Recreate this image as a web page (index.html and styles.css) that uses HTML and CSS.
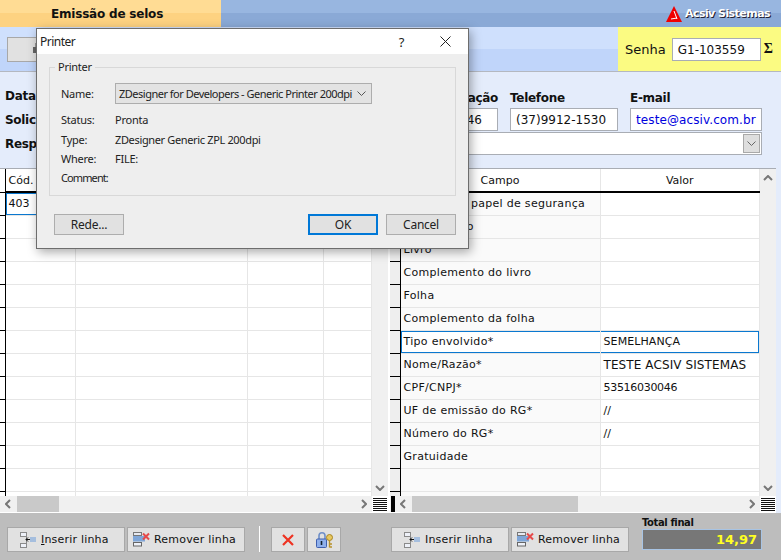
FILE: index.html
```html
<!DOCTYPE html>
<html lang="pt-BR">
<head>
  <meta charset="UTF-8" />
  <title>Emissão de selos</title>
  <link rel="stylesheet" href="styles.css">
</head>
<body>
  <svg class="defs" width="0" height="0">
    <symbol id="icoInserir" viewBox="0 0 16 16">
      <rect x="0.5" y="0.5" width="6" height="4" fill="#eef1f8" stroke="#8a8a8a" />
      <rect x="0.5" y="11.5" width="6" height="4" fill="#eef1f8" stroke="#8a8a8a" />
      <path d="M6.5 4.5v7" stroke="#888" fill="none" />
      <path d="M6 7.5h4M8 5.5l-2 2 2 2" stroke="#111" fill="none" />
      <rect x="10" y="5" width="6" height="5" fill="#a5bede" />
    </symbol>
    <symbol id="icoRemover" viewBox="0 0 17 15">
      <rect x="0.5" y="0.5" width="8" height="3" fill="#e6e9f0" stroke="#777" />
      <rect x="0" y="4" width="12" height="5.5" fill="#7fa6d8" />
      <rect x="0.5" y="10.5" width="8" height="3.5" fill="#eef1f8" stroke="#666" />
      <path d="M10 1.5l6 6M16 1.5l-6 6" stroke="#e64a4a" stroke-width="2" fill="none" />
    </symbol>
    <symbol id="icoLinhas" viewBox="0 0 14 13">
      <path d="M0 .5h14M0 2.5h14M0 4.5h14M0 6.5h14M0 8.5h14M0 10.5h14M0 12.5h14" stroke="#111" fill="none" />
    </symbol>
    <symbol id="chevUp" viewBox="0 0 10 6"><path d="M1 5l4-4 4 4" stroke="#777" stroke-width="2" fill="none" /></symbol>
    <symbol id="chevDown" viewBox="0 0 10 6"><path d="M1 1l4 4 4-4" stroke="#777" stroke-width="2" fill="none" /></symbol>
    <symbol id="chevLeft" viewBox="0 0 6 10"><path d="M5 1L1 5l4 4" stroke="#777" stroke-width="2" fill="none" /></symbol>
    <symbol id="chevRight" viewBox="0 0 6 10"><path d="M1 1l4 4-4 4" stroke="#777" stroke-width="2" fill="none" /></symbol>
  </svg>

  <div class="topo">
    <div class="aba">Emissão de selos</div>
    <div class="marca">
      <svg class="logo" width="16" height="16" viewBox="0 0 16 16">
        <path d="M8 0L16 16H0z" fill="#f00000" />
        <path d="M8 5l3 8M11 12L5 13" stroke="#fff" stroke-width="1" fill="none" />
      </svg>
      <span>Acsiv Sistemas</span>
    </div>
  </div>

  <div class="barra">
    <button class="btn-imprimir">
      <svg width="14" height="14" viewBox="0 0 14 14"><rect x="1" y="5" width="12" height="6" fill="#666" /><rect x="3" y="1" width="8" height="4" fill="#999" /></svg>
    </button>
    <div class="senha">
      <label>Senha</label>
      <span class="campo senha-campo">G1-103559</span>
      <span class="sigma">Σ</span>
    </div>
  </div>

  <div class="dados">
    <div class="colunas">
      <div class="rotulos">
        <div>Data</div>
        <div>Solicitante</div>
        <div>Responsável</div>
      </div>
      <div class="campos">
        <div class="linha-topo">
          <div class="grupo g-identificacao">
            <label>Identificação</label>
            <span class="campo">53516030046</span>
          </div>
          <div class="grupo g-telefone">
            <label>Telefone</label>
            <span class="campo">(37)9912-1530</span>
          </div>
          <div class="grupo g-email">
            <label>E-mail</label>
            <span class="campo email">teste@acsiv.com.br</span>
          </div>
        </div>
        <div class="combo">
          <span class="combo-seta"><svg width="9" height="5" viewBox="0 0 9 5"><path d="M.5.5l4 4 4-4" stroke="#666" fill="none" /></svg></span>
        </div>
      </div>
    </div>
  </div>

  <div class="grades">
    <div class="grade grade-esq">
      <div class="grade-corpo">
        <table class="tabela">
          <colgroup><col class="c-ind-esq" /><col class="c-cod" /><col class="c-a" /><col class="c-b" /><col /></colgroup>
          <thead><tr><th class="ind"></th><th class="cod">Cód.</th><th></th><th></th><th></th></tr></thead>
          <tbody>
            <tr><td class="ind"></td><td class="foco-cel">403</td><td></td><td></td><td></td></tr>
            <tr><td class="ind"></td><td></td><td></td><td></td><td></td></tr>
            <tr><td class="ind"></td><td></td><td></td><td></td><td></td></tr>
            <tr><td class="ind"></td><td></td><td></td><td></td><td></td></tr>
            <tr><td class="ind"></td><td></td><td></td><td></td><td></td></tr>
            <tr><td class="ind"></td><td></td><td></td><td></td><td></td></tr>
            <tr><td class="ind"></td><td></td><td></td><td></td><td></td></tr>
            <tr><td class="ind"></td><td></td><td></td><td></td><td></td></tr>
            <tr><td class="ind"></td><td></td><td></td><td></td><td></td></tr>
            <tr><td class="ind"></td><td></td><td></td><td></td><td></td></tr>
            <tr><td class="ind"></td><td></td><td></td><td></td><td></td></tr>
            <tr><td class="ind"></td><td></td><td></td><td></td><td></td></tr>
            <tr><td class="ind"></td><td></td><td></td><td></td><td></td></tr>
            <tr><td class="ind"></td><td></td><td></td><td></td><td></td></tr>
          </tbody>
        </table>
        <div class="vscroll">
          <svg width="10" height="6"><use href="#chevUp" /></svg>
          <svg width="10" height="6"><use href="#chevDown" /></svg>
        </div>
      </div>
      <div class="hscroll">
        <svg width="6" height="10"><use href="#chevLeft" /></svg>
        <div class="trilho"><span class="polegar pol-esq"></span></div>
        <svg width="6" height="10"><use href="#chevRight" /></svg>
        <span class="canto"><svg width="14" height="13"><use href="#icoLinhas" /></svg></span>
      </div>
    </div>

    <div class="divisor"><span></span></div>

    <div class="grade grade-dir">
      <div class="grade-corpo">
        <table class="tabela">
          <colgroup><col class="c-ind-dir" /><col class="c-campo" /><col /></colgroup>
          <thead><tr><th class="ind"></th><th>Campo</th><th>Valor</th></tr></thead>
          <tbody>
            <tr><td class="ind"></td><td class="rot">Número do papel de segurança</td><td></td></tr>
            <tr><td class="ind"></td><td class="rot">Nº do termo</td><td></td></tr>
            <tr><td class="ind"></td><td class="rot">Livro</td><td></td></tr>
            <tr><td class="ind"></td><td class="rot">Complemento do livro</td><td></td></tr>
            <tr><td class="ind"></td><td class="rot">Folha</td><td></td></tr>
            <tr><td class="ind"></td><td class="rot">Complemento da folha</td><td></td></tr>
            <tr class="foco"><td class="ind"></td><td class="rot">Tipo envolvido*</td><td class="val">SEMELHANÇA</td></tr>
            <tr><td class="ind"></td><td class="rot">Nome/Razão*</td><td class="val val-nome">TESTE ACSIV SISTEMAS</td></tr>
            <tr><td class="ind"></td><td class="rot">CPF/CNPJ*</td><td class="val val-num">53516030046</td></tr>
            <tr><td class="ind"></td><td class="rot">UF de emissão do RG*</td><td class="val">//</td></tr>
            <tr><td class="ind"></td><td class="rot">Número do RG*</td><td class="val">//</td></tr>
            <tr><td class="ind"></td><td class="rot">Gratuidade</td><td></td></tr>
            <tr><td class="ind"></td><td class="rot"></td><td></td></tr>
            <tr><td class="ind"></td><td class="rot"></td><td></td></tr>
          </tbody>
        </table>
        <div class="vscroll">
          <svg width="10" height="6"><use href="#chevUp" /></svg>
          <svg width="10" height="6"><use href="#chevDown" /></svg>
        </div>
      </div>
      <div class="hscroll">
        <svg width="6" height="10"><use href="#chevLeft" /></svg>
        <div class="trilho"><span class="polegar pol-dir"></span></div>
        <svg width="6" height="10"><use href="#chevRight" /></svg>
        <span class="canto"><svg width="14" height="13"><use href="#icoLinhas" /></svg></span>
      </div>
    </div>
  </div>

  <div class="rodape">
    <button class="btn btn-linha"><svg width="16" height="16"><use href="#icoInserir" /></svg><span><u>I</u>nserir linha</span></button>
    <button class="btn btn-linha btn-rem"><svg width="17" height="15"><use href="#icoRemover" /></svg><span>Remover linha</span></button>
    <span class="sep"></span>
    <button class="btn btn-ico">
      <svg width="12" height="12" viewBox="0 0 12 12"><path d="M1 1l10 10M11 1L1 11" stroke="#ee3322" stroke-width="2.2" fill="none" /></svg>
    </button>
    <button class="btn btn-ico">
      <svg width="17" height="16" viewBox="0 0 17 16">
        <path d="M3 7V3.8a3 3 0 0 1 6 0V7" stroke="#6f8fc8" stroke-width="1.6" fill="none" />
        <rect x="0.5" y="7" width="10" height="8.5" rx="1" fill="#8fb0ec" stroke="#3f5fae" />
        <path d="M5.5 9v4" stroke="#123" stroke-width="1.6" />
        <circle cx="13.5" cy="5.5" r="3" fill="#e8c860" stroke="#a88420" />
        <path d="M13.5 8v7.5M13.5 12h2.5M13.5 15h2.5" stroke="#b8922c" stroke-width="1.4" fill="none" />
      </svg>
    </button>
    <button class="btn btn-linha btn-dir"><svg width="16" height="16"><use href="#icoInserir" /></svg><span>Inserir linha</span></button>
    <button class="btn btn-linha btn-rem"><svg width="17" height="15"><use href="#icoRemover" /></svg><span>Remover linha</span></button>
    <div class="total">
      <label>Total final</label>
      <div class="total-valor">14,97</div>
    </div>
  </div>

  <div class="dialogo">
    <div class="dlg-titulo">
      <span class="dlg-nome">Printer</span>
      <span class="dlg-ajuda">?</span>
      <svg class="dlg-fechar" width="11" height="11" viewBox="0 0 11 11"><path d="M.5.5l10 10M10.5.5l-10 10" stroke="#222" fill="none" /></svg>
    </div>
    <div class="dlg-corpo">
      <fieldset class="dlg-grupo">
        <legend>Printer</legend>
        <div class="dlg-linha dlg-linha-nome">
          <span class="dlg-rot">Name:</span>
          <span class="dlg-select"><span class="dlg-select-txt">ZDesigner for Developers - Generic Printer 200dpi</span>
            <svg width="9" height="5" viewBox="0 0 9 5"><path d="M.5.5l4 4 4-4" stroke="#555" fill="none" /></svg>
          </span>
        </div>
        <div class="dlg-linha"><span class="dlg-rot">Status:</span><span>Pronta</span></div>
        <div class="dlg-linha"><span class="dlg-rot">Type:</span><span class="dlg-tipo">ZDesigner Generic ZPL 200dpi</span></div>
        <div class="dlg-linha"><span class="dlg-rot">Where:</span><span>FILE:</span></div>
        <div class="dlg-linha"><span class="dlg-rot dlg-comment">Comment:</span><span></span></div>
      </fieldset>
      <div class="dlg-botoes">
        <button class="dlg-btn">Rede...</button>
        <button class="dlg-btn dlg-ok">OK</button>
        <button class="dlg-btn">Cancel</button>
      </div>
    </div>
  </div>
</body>
</html>
```

FILE: styles.css
```css
* { box-sizing: border-box; }

html, body { margin: 0; height: 100%; }

body {
  position: relative;
  width: 781px;
  height: 560px;
  overflow: hidden;
  font-family: 'DejaVu Sans', sans-serif;
  font-size: 11px;
  color: #111;
  background: #bdbdbd;
}

.defs { position: absolute; }

button { font-family: inherit; font-size: inherit; color: inherit; }

/* topo */
.topo {
  display: flex;
  height: 27px;
  background: linear-gradient(#98b6e0 0, #98b6e0 50%, #8aa9d6 50%, #8aa9d6 100%);
}

.aba {
  width: 221px;
  padding: 7px 0 0 51px;
  font-size: 12px;
  font-weight: bold;
  letter-spacing: -0.2px;
  background: linear-gradient(#ffdc94 0, #ffdc94 50%, #fdd281 50%, #fdd281 100%);
}

.marca {
  display: flex;
  align-items: center;
  gap: 3px;
  margin-left: auto;
  padding: 0 11px 0 0;
  color: #fff;
  font-size: 11px;
  font-weight: bold;
  letter-spacing: -0.55px;
  text-shadow: 1px 1px 0 #223;
}

/* barra */
.barra {
  display: flex;
  justify-content: space-between;
  height: 45px;
  border-bottom: 1px solid #b4b8c0;
  background: linear-gradient(#cfe0fd 0, #cfe0fd 50%, #c0d5fa 50%, #c0d5fa 100%);
}

.btn-imprimir {
  width: 60px;
  height: 25px;
  margin: 10px 0 0 7px;
  padding: 2px 0 0 24px;
  border: 1px solid #a8a8a8;
  background: #e1e1e1;
  text-align: left;
}

.senha {
  display: flex;
  align-items: center;
  gap: 6px;
  width: 163px;
  padding-left: 7px;
  background: #fbfb82;
  font-size: 13px;
}

.senha-campo { width: 89px; height: 24px; font-size: 12px; }

.sigma { margin-left: -3px; font-size: 14px; font-weight: bold; font-family: 'Liberation Serif', serif; }

.campo {
  display: block;
  height: 23px;
  padding: 0 0 0 5px;
  border: 1px solid #a9adb4;
  background: #fff;
  font-size: 12px;
  line-height: 22px;
  white-space: nowrap;
  overflow: hidden;
}

/* dados */
.dados {
  height: 96px;
  padding: 16px 19px 0 5px;
  background: #e4ecfb;
}

.colunas { display: flex; justify-content: space-between; }

.rotulos {
  margin-top: -4px;
  font-size: 12px;
  font-weight: bold;
  line-height: 24px;
  letter-spacing: -0.3px;
}

.campos { width: 460px; }

.linha-topo { display: flex; gap: 12px; justify-content: flex-end; }

.grupo label { display: block; height: 20px; font-size: 12px; font-weight: bold; line-height: 20px; letter-spacing: -0.3px; }

.g-identificacao { width: 120px; text-align: right; }
.g-identificacao .campo { padding-right: 15px; }
.g-telefone { width: 108px; }
.g-email { width: 132px; }

.email { color: #0000dd; letter-spacing: 0.1px; }

.combo {
  display: flex;
  justify-content: flex-end;
  align-items: center;
  height: 23px;
  margin-top: 1px;
  padding-right: 1px;
  border: 1px solid #a9adb4;
  background: #fff;
}

.combo-seta {
  display: flex;
  justify-content: center;
  align-items: center;
  width: 17px;
  height: 19px;
  border: 1px solid #a9a9a9;
  background: #dedede;
}

/* grades */
.grades { display: flex; height: 345px; background: #e4ecfb; }

.grade { display: flex; flex-direction: column; background: #fff; border-bottom: 1px solid #fff; }
.grade-esq { width: 388px; }
.grade-dir { width: 386px; }

.divisor { width: 2px; background: #fff; position: relative; }
.divisor span {
  position: absolute;
  left: 3px;
  bottom: 1px;
  width: 4px;
  height: 16px;
  background: #000;
  z-index: 1;
}

.grade-corpo { display: flex; height: 328px; border-top: 1px solid #a9adb4; overflow: hidden; }

.tabela { flex: 1; min-width: 0; border-collapse: collapse; table-layout: fixed; height: 0; }

.c-ind-esq { width: 5px; }
.c-cod { width: 70px; }
.c-a { width: 172px; }
.c-b { width: 76px; }
.c-ind-dir { width: 10px; }
.c-campo { width: 200px; }

.tabela th {
  height: 23px;
  padding: 0;
  font-weight: normal;
  text-align: center;
  border-right: 1px solid #e6e6e6;
  border-bottom: 2px solid #000;
}

.tabela th.cod { text-align: left; padding-left: 3px; }

.tabela td {
  height: 23px;
  padding: 0 3px;
  border-right: 1px solid #e6e6e6;
  border-bottom: 1px solid #e6e6e6;
  white-space: nowrap;
  overflow: hidden;
}

.tabela .ind { padding: 0; border-right: 1px solid #000; border-bottom: 1px solid #000; }
.grade-dir .ind { background: #eeeeee; }

.tabela .rot { padding-left: 3px; background: #fafafa; letter-spacing: 0.3px; }
.val { letter-spacing: 0.1px; }
.val-nome { font-size: 12px; }
.val-num { letter-spacing: -0.3px; }

.foco-cel { box-shadow: inset 0 0 0 1px #0a78d0; }

.foco td:not(.ind) { box-shadow: inset 0 1px 0 #0a78d0, inset 0 -1px 0 #0a78d0; background: #fff; }
.foco td.rot { box-shadow: inset 0 1px 0 #0a78d0, inset 0 -1px 0 #0a78d0, inset 1px 0 0 #0a78d0; }
.foco td.val { box-shadow: inset 0 1px 0 #0a78d0, inset 0 -1px 0 #0a78d0, inset -1px 0 0 #0a78d0; }

.vscroll {
  display: flex;
  flex-direction: column;
  justify-content: space-between;
  align-items: center;
  flex: 0 0 16px;
  padding: 6px 0 5px;
  background: #f0f0f0;
}

.hscroll {
  display: flex;
  align-items: center;
  height: 16px;
  padding-left: 5px;
  background: #f0f0f0;
}

.grade-dir .hscroll { padding-left: 10px; }

.trilho { flex: 1; height: 16px; margin: 0 5px; }

.polegar { display: block; height: 16px; background: #c9c9c9; }
.pol-esq { width: 42px; margin-left: 1px; }
.pol-dir { width: 166px; margin-left: 1px; }

.canto {
  display: flex;
  justify-content: center;
  align-items: center;
  width: 16px;
  height: 16px;
  margin-left: 5px;
  background: #fff;
}

/* rodape */
.rodape {
  display: flex;
  align-items: flex-end;
  gap: 2px;
  height: 48px;
  padding: 0 0 9px 7px;
  background: #bdbdbd;
}

.btn {
  display: flex;
  align-items: center;
  height: 25px;
  padding: 0;
  border: 1px solid #a8a8a8;
  background: #e1e1e1;
}

.btn-linha { gap: 5px; width: 118px; padding-left: 12px; letter-spacing: 0.2px; }
.btn-linha svg { flex: none; }
.btn-rem { gap: 4px; padding-left: 5px; }
.btn-ico { justify-content: center; width: 34px; }
.btn-dir { margin-left: 48px; }

.sep { width: 1px; height: 26px; margin: 0 9px 0 12px; background: #fff; }

.total { width: 120px; margin-left: 11px; margin-bottom: 2px; }
.total label { display: block; font-size: 10px; font-weight: bold; line-height: 13px; letter-spacing: -0.4px; }

.total-valor {
  height: 21px;
  padding-right: 4px;
  border: 1px solid #a8c4e4;
  background: #777;
  color: #ffff22;
  font-size: 13px;
  font-weight: bold;
  line-height: 19px;
  text-align: right;
}

/* dialogo */
.dialogo {
  position: absolute;
  left: 36px;
  top: 28px;
  width: 433px;
  height: 221px;
  border: 1px solid #6d6d6d;
  background: #eeeeee;
  box-shadow: 2px 3px 10px rgba(0, 0, 0, 0.35);
  font-family: 'Noto Sans', sans-serif;
  font-size: 11px;
  color: #222;
  letter-spacing: -0.25px;
}

.dlg-titulo {
  display: flex;
  align-items: center;
  height: 25px;
  padding: 0 17px 0 3px;
  background: #fff;
  font-size: 12px;
  letter-spacing: -0.5px;
}

.dlg-ajuda { margin-left: auto; margin-right: 36px; font-size: 13px; }

.dlg-corpo { padding: 7px 12px 0 12px; }

.dlg-grupo {
  height: 135px;
  margin: 0;
  padding: 10px 0 0 11px;
  border: 1px solid #d8d8d8;
}

.dlg-grupo legend { padding: 0 3px; margin-left: -6px; font-size: 11px; line-height: 12px; }

.dlg-linha { display: flex; align-items: center; height: 19.4px; }
.dlg-linha-nome { height: 21px; margin-bottom: 6px; }

.dlg-rot { width: 54px; flex: none; }
.dlg-comment { letter-spacing: -0.9px; }
.dlg-tipo { letter-spacing: -0.35px; }

.dlg-select {
  display: flex;
  align-items: center;
  justify-content: space-between;
  width: 257px;
  height: 21px;
  padding: 0 5px 0 3px;
  border: 1px solid #adadad;
  background: #e3e3e3;
  white-space: nowrap;
}

.dlg-select-txt { letter-spacing: -0.5px; }

.dlg-botoes { display: flex; justify-content: flex-end; gap: 8px; margin-top: 18px; }

.dlg-btn {
  width: 70px;
  height: 21px;
  padding: 0;
  border: 1px solid #adadad;
  background: #e1e1e1;
  font-size: 12px;
  letter-spacing: -0.25px;
}

.dlg-btn:first-child { margin-right: auto; margin-left: 5px; }

.dlg-ok { border: 2px solid #0078d7; }
```
